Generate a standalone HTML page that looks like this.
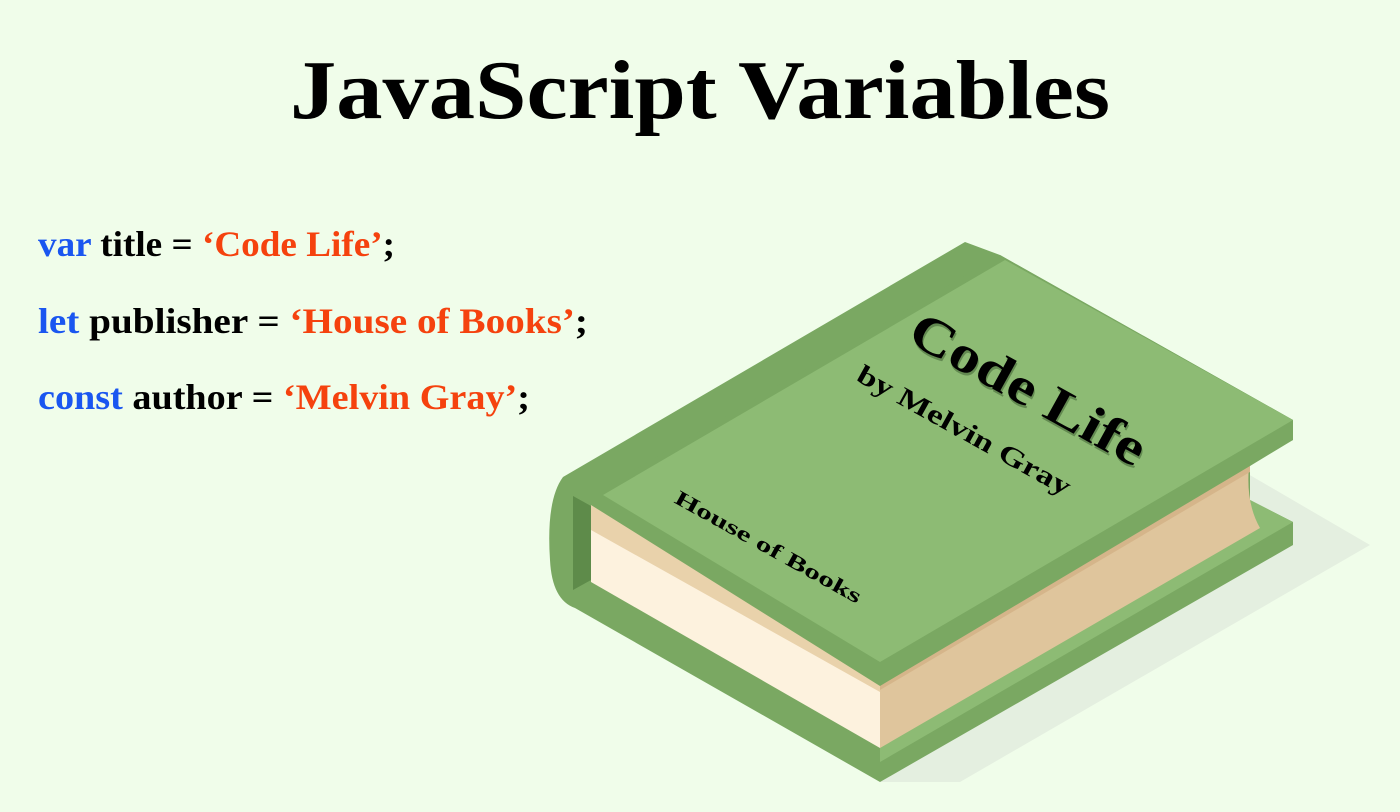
<!DOCTYPE html>
<html><head><meta charset="utf-8"><style>
html,body{margin:0;padding:0;background:#f0fdea;}
svg{display:block}
</style></head><body>
<svg width="1400" height="812" viewBox="0 0 1400 812" xmlns="http://www.w3.org/2000/svg">
<rect width="1400" height="812" fill="#f0fdea"/>
<text x="290" y="118" font-family="Liberation Serif, serif" font-weight="bold" font-size="84" textLength="820" lengthAdjust="spacingAndGlyphs" fill="#000">JavaScript Variables</text>
<g font-family="Liberation Serif, serif" font-weight="bold" font-size="36">
<text x="38" y="256" textLength="357" lengthAdjust="spacingAndGlyphs"><tspan fill="#1a56f0">var</tspan><tspan fill="#000"> title = </tspan><tspan fill="#f5420e">‘Code Life’</tspan><tspan fill="#000">;</tspan></text>
<text x="38" y="333" textLength="550" lengthAdjust="spacingAndGlyphs"><tspan fill="#1a56f0">let</tspan><tspan fill="#000"> publisher = </tspan><tspan fill="#f5420e">‘House of Books’</tspan><tspan fill="#000">;</tspan></text>
<text x="38" y="409" textLength="492" lengthAdjust="spacingAndGlyphs"><tspan fill="#1a56f0">const</tspan><tspan fill="#000"> author = </tspan><tspan fill="#f5420e">‘Melvin Gray’</tspan><tspan fill="#000">;</tspan></text>
</g>
<!-- shadow -->
<polygon points="1248,474 1370,545 960,782 880,782" fill="#e4efe0"/>
<!-- silhouette -->
<path d="M563,477 L965,242 L1000,255 L1293,420 L1293,440 L1250,466 L1250,500 L1293,522 L1293,545 L880,782 L575,608 Q552,600 550,560 Q546,500 563,477 Z" fill="#7aa862"/>
<polygon points="880,745 1250,500 1293,522 880,762" fill="#8dbb74"/>
<!-- pages -->
<polygon points="591,505 880,668 880,748 591,582" fill="#fdf2de"/>
<polygon points="591,505 880,668 880,692 591,530" fill="#e9d2ab"/>
<path d="M880,668 L1250,458 Q1244,500 1260,528 L880,748 Z" fill="#dfc59c"/>
<polygon points="880,668 1250,458 1250,472 880,690" fill="#d5b58a"/>
<!-- spine inner -->
<polygon points="573,496 591,506 591,580 573,590" fill="#5e8b4a"/>
<!-- cover -->
<path d="M1000,255 L1293,420 L1293,440 Q1262,452 1250,466 L880,686 L591,505 L600,490 Z" fill="#7aa862"/>
<polygon points="1005,260 1293,420 880,662 603,495" fill="#8dbb74"/>
<!-- cover text -->
<g font-family="Liberation Serif, serif" font-weight="bold" fill="#000">
<g transform="translate(1020,404) rotate(29)">
<text x="2" y="2" text-anchor="middle" font-size="52" fill="#3a5a30" opacity="0.5" textLength="262" lengthAdjust="spacingAndGlyphs">Code Life</text>
<text x="0" y="0" text-anchor="middle" font-size="52" textLength="262" lengthAdjust="spacingAndGlyphs">Code Life</text>
</g>
<g transform="translate(960,438) rotate(29)">
<text x="0" y="0" text-anchor="middle" font-size="27" textLength="240" lengthAdjust="spacingAndGlyphs">by Melvin Gray</text>
</g>
<g transform="translate(765,553) rotate(29)">
<text x="0" y="0" text-anchor="middle" font-size="21" textLength="210" lengthAdjust="spacingAndGlyphs">House of Books</text>
</g>
</g>
</svg>
</body></html>
